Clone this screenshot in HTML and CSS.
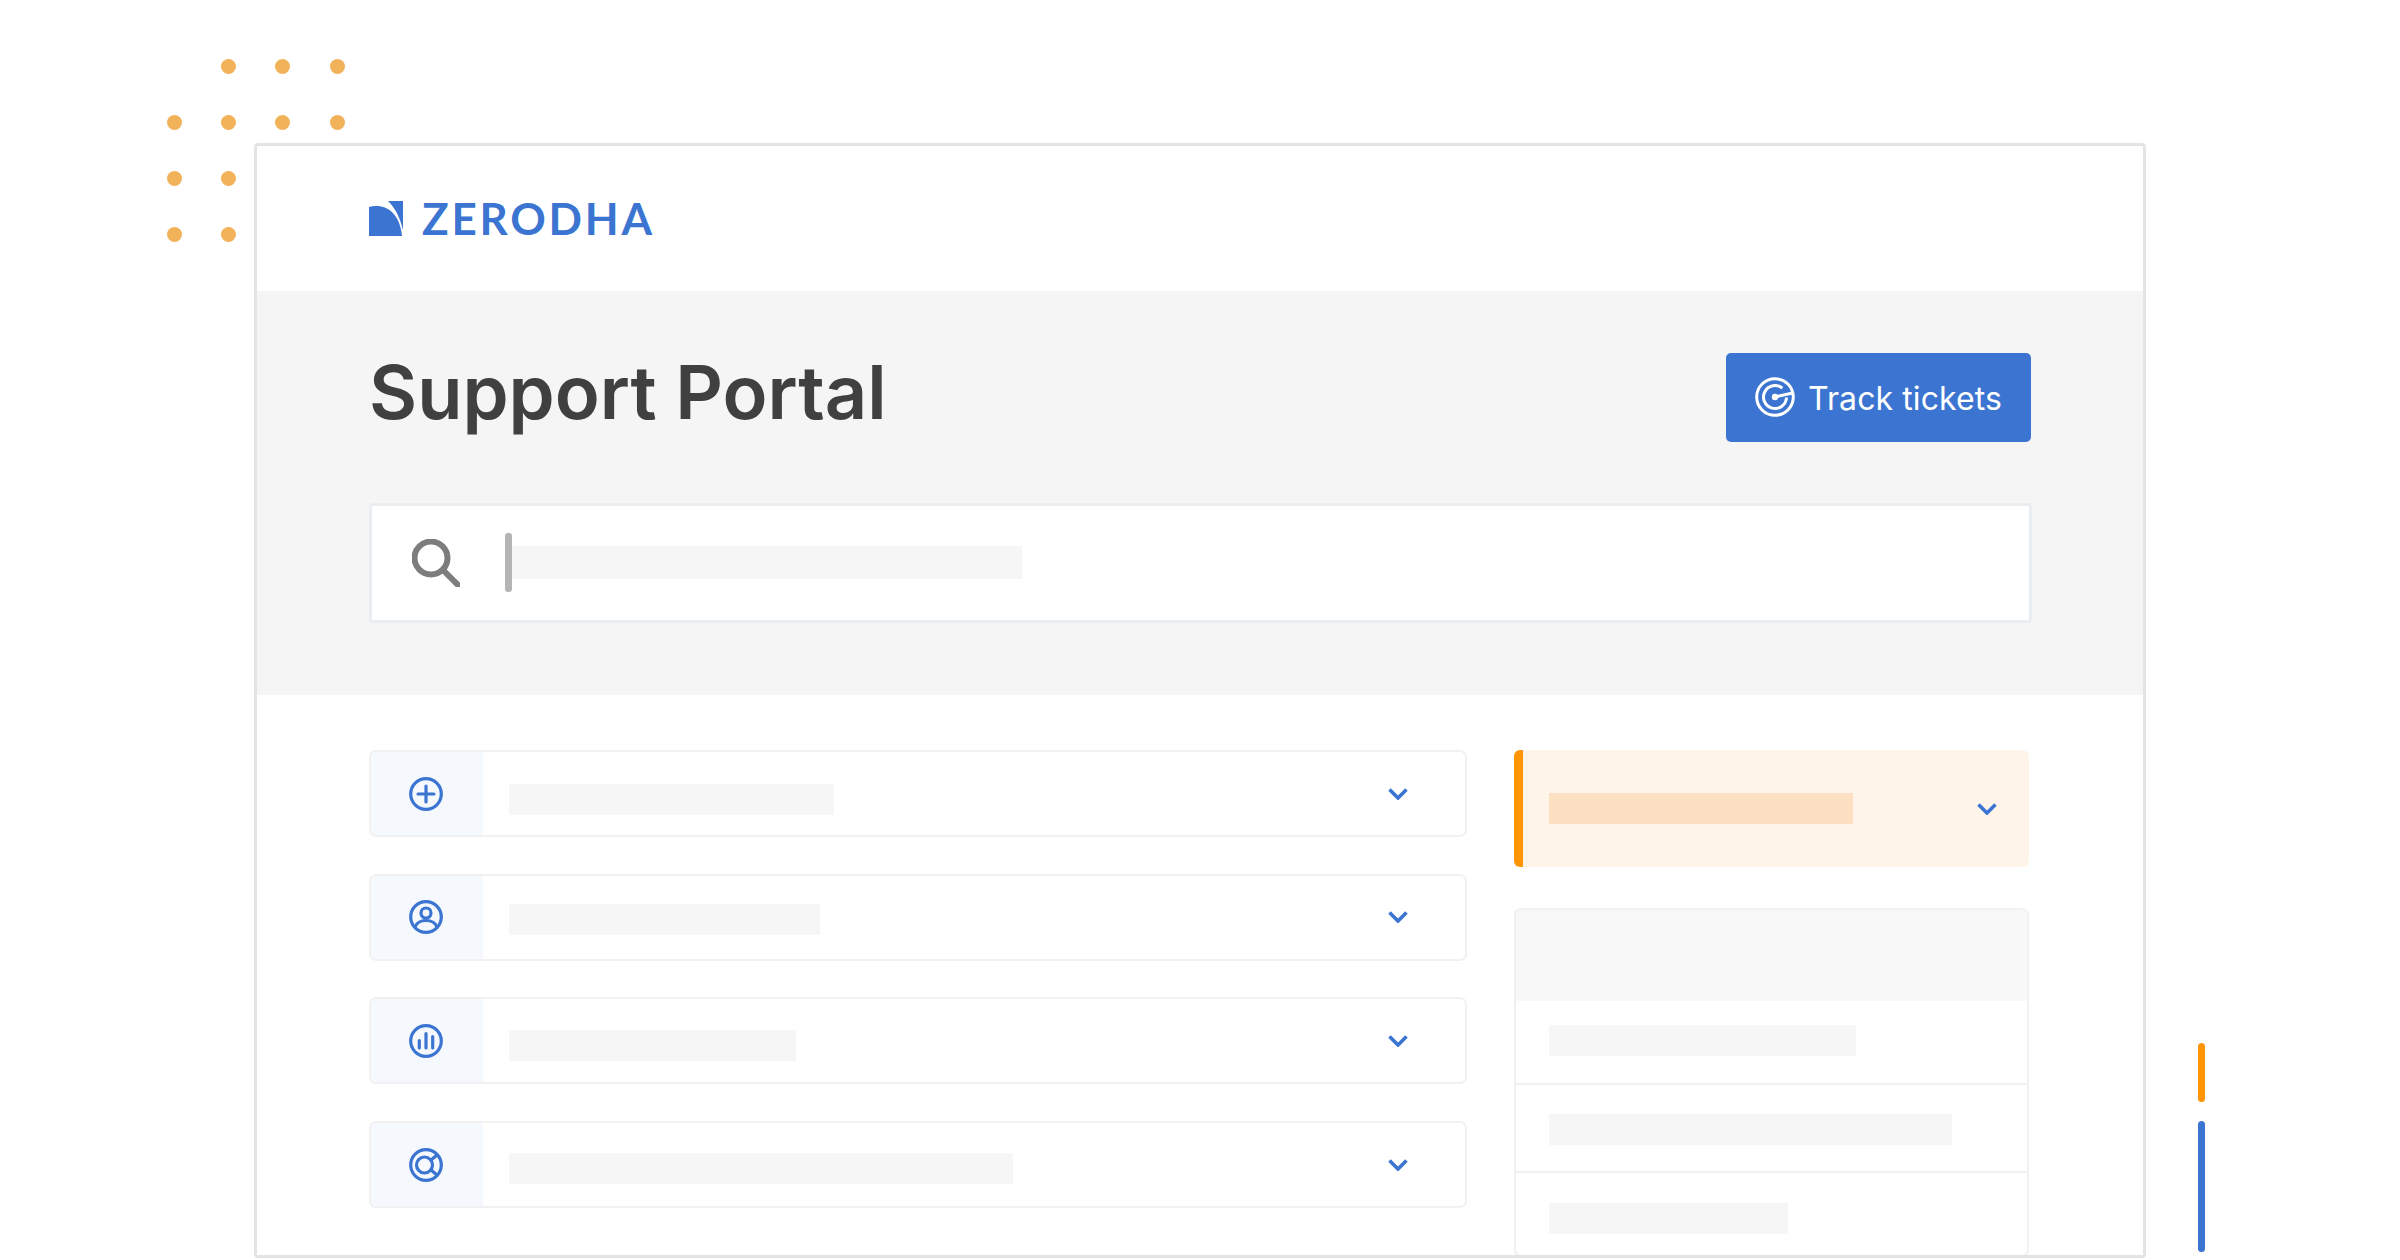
FILE: index.html
```html
<!DOCTYPE html>
<html lang="en">
<head>
  <meta charset="UTF-8">
  <title>Support Portal</title>
  <link rel="stylesheet" href="styles.css">
</head>
<body>

  <!-- decorative dots behind the frame -->
  <div class="dots">
    <i class="empty"></i><i></i><i></i><i></i>
    <i></i><i></i><i></i><i></i>
    <i></i><i></i><i class="empty"></i><i class="empty"></i>
    <i></i><i></i><i class="empty"></i><i class="empty"></i>
  </div>

  <div class="accent accent-orange"></div>
  <div class="accent accent-blue"></div>

  <div class="frame">
    <header class="brand">
      <svg class="logo" viewBox="0 0 34 35" aria-hidden="true">
        <path d="M0 6C11 3 30 6 33 35H0Z"/>
        <path d="M19 0H34V29C31 17 27 8 19 0Z"/>
      </svg>
      <span class="wordmark">ZERODHA</span>
    </header>

    <section class="hero">
      <div class="hero-top">
        <h1>Support Portal</h1>
        <a class="track-btn" href="#">
          <svg class="track-icon" viewBox="0 0 40 40" aria-hidden="true">
            <circle cx="20" cy="20" r="18.300"/>
            <path d="M27.400 11.200A11.500 11.500 0 1 0 31.500 20.500"/>
            <path d="M20 20L37.500 16"/>
            <circle class="solid" cx="20" cy="20" r="3.200"/>
          </svg>
          <span>Track tickets</span>
        </a>
      </div>

      <div class="search">
        <svg class="search-icon" viewBox="0 0 48 48" aria-hidden="true">
          <circle cx="19" cy="19" r="16.500"/>
          <path d="M31 31L46 46"/>
        </svg>
        <span class="caret"></span>
        <span class="bar search-bar"></span>
      </div>
    </section>

    <section class="content">
      <div class="topics">
        <div class="topic">
          <div class="topic-icon">
            <svg viewBox="0 0 34 34" aria-hidden="true">
              <circle cx="17" cy="17" r="15.300"/>
              <path d="M17 9V25M9 17H25"/>
            </svg>
          </div>
          <span class="bar bar-1"></span>
          <svg class="chevron" viewBox="0 0 20 12" aria-hidden="true"><path d="M1.500 1.500L10 10L18.500 1.500"/></svg>
        </div>

        <div class="topic">
          <div class="topic-icon">
            <svg viewBox="0 0 34 34" aria-hidden="true">
              <circle cx="17" cy="17" r="15.300"/>
              <circle cx="17" cy="13" r="5"/>
              <path d="M6 27C8 22 12 20.500 17 20.500S26 22 28 27"/>
            </svg>
          </div>
          <span class="bar bar-2"></span>
          <svg class="chevron" viewBox="0 0 20 12" aria-hidden="true"><path d="M1.500 1.500L10 10L18.500 1.500"/></svg>
        </div>

        <div class="topic">
          <div class="topic-icon">
            <svg viewBox="0 0 34 34" aria-hidden="true">
              <circle cx="17" cy="17" r="15.300"/>
              <path d="M10.300 16.500V24M17 9.500V24M23.700 12.500V24"/>
            </svg>
          </div>
          <span class="bar bar-3"></span>
          <svg class="chevron" viewBox="0 0 20 12" aria-hidden="true"><path d="M1.500 1.500L10 10L18.500 1.500"/></svg>
        </div>

        <div class="topic">
          <div class="topic-icon">
            <svg viewBox="0 0 34 34" aria-hidden="true">
              <circle cx="17" cy="17" r="15.300"/>
              <circle cx="15.500" cy="17" r="8"/>
              <path d="M22 12L28 7M22 22L28 27"/>
            </svg>
          </div>
          <span class="bar bar-4"></span>
          <svg class="chevron" viewBox="0 0 20 12" aria-hidden="true"><path d="M1.500 1.500L10 10L18.500 1.500"/></svg>
        </div>
      </div>

      <aside class="side">
        <div class="notice">
          <span class="bar notice-bar"></span>
          <svg class="chevron" viewBox="0 0 20 12" aria-hidden="true"><path d="M1.500 1.500L10 10L18.500 1.500"/></svg>
        </div>

        <div class="panel">
          <div class="panel-head"></div>
          <div class="panel-row"><span class="bar side-1"></span></div>
          <div class="panel-row"><span class="bar side-2"></span></div>
          <div class="panel-row"><span class="bar side-3"></span></div>
        </div>
      </aside>
    </section>
  </div>

</body>
</html>
```

FILE: styles.css
```css
:root {
  --blue: #3b75d1;
  --orange: #ff9502;
  --line: #f1f1f1;
  --skeleton: #f6f6f6;
  --hero-bg: #f5f5f5;
}

* {
  box-sizing: border-box;
}

body {
  margin: 0;
  padding: 143px 254px 0;
  height: 1260px;
  overflow: hidden;
  background: #fff;
  font-family: "Inter", "Liberation Sans", sans-serif;
  position: relative;
}

/* decoration */

.dots {
  position: absolute;
  left: 167px;
  top: 59px;
  display: grid;
  grid-template-columns: repeat(4, 15px);
  grid-auto-rows: 15px;
  column-gap: 39.200px;
  row-gap: 41px;
}

.dots i {
  background: #f2b259;
  border-radius: 50%;
}

.dots .empty {
  background: none;
}

.accent {
  position: absolute;
  left: 2198px;
  width: 7px;
  border-radius: 4px;
}

.accent-orange {
  top: 1043px;
  height: 59px;
  background: var(--orange);
}

.accent-blue {
  top: 1121px;
  height: 131px;
  background: var(--blue);
}

/* frame */

.frame {
  width: 1892px;
  height: 1115px;
  border: 3px solid #e4e4e4;
  border-radius: 4px;
  background: #fff;
  overflow: hidden;
  position: relative;
}

.brand {
  height: 145px;
  padding-left: 112px;
  display: flex;
  align-items: center;
}

.logo {
  width: 34px;
  height: 35px;
  fill: var(--blue);
  margin-right: 19px;
}

.wordmark {
  font-family: "Lato", sans-serif;
  font-size: 44px;
  font-weight: 700;
  color: var(--blue);
  letter-spacing: 2.800px;
  line-height: 1;
  margin-top: -1px;
}

.hero {
  height: 404px;
  padding: 62px 112px 0;
  background: var(--hero-bg);
}

.hero-top {
  display: flex;
  justify-content: space-between;
  align-items: center;
  height: 89px;
}

h1 {
  margin: 0 0 12px;
  font-size: 74px;
  font-weight: 600;
  color: #404040;
  line-height: 1;
}

.track-btn {
  width: 305px;
  height: 89px;
  padding-left: 29px;
  display: flex;
  align-items: center;
  gap: 13px;
  background: var(--blue);
  border-radius: 5px;
  color: #fff;
  font-size: 32px;
  letter-spacing: 0.100px;
  text-decoration: none;
}

.track-btn span {
  margin-top: 2px;
}

.track-icon {
  width: 40px;
  height: 40px;
  margin-top: -2px;
  fill: none;
  stroke: #fff;
  stroke-width: 3;
}

.track-icon .solid {
  fill: #fff;
  stroke: none;
}

.search {
  margin: 61px -1px 0 0;
  height: 120px;
  padding-left: 40px;
  display: flex;
  align-items: center;
  background: #fff;
  border: 3px solid #ebeef1;
  border-radius: 3px;
}

.search-icon {
  width: 48px;
  height: 48px;
  margin-right: 45px;
  fill: none;
  stroke: #7d7d7d;
  stroke-width: 6;
  stroke-linecap: round;
}

.caret {
  width: 7px;
  height: 59px;
  margin-top: -1px;
  background: #b4b4b4;
  border-radius: 3px;
}

.bar {
  display: block;
  height: 31px;
  background: var(--skeleton);
}

.search-bar {
  width: 510px;
  height: 33px;
  margin-top: -2px;
}

/* main content */

.content {
  padding: 55px 0 0 112px;
  display: grid;
  grid-template-columns: 1098px 515px;
  column-gap: 47px;
  align-items: start;
}

.topics {
  display: flex;
  flex-direction: column;
  gap: 36.700px;
}

.topic {
  height: 87px;
  display: flex;
  align-items: center;
  border: 2px solid var(--line);
  border-radius: 7px;
  padding-right: 57px;
}

.topic-icon {
  width: 112px;
  height: 100%;
  padding-right: 3px;
  display: flex;
  align-items: center;
  justify-content: center;
  background: #f5f9fe;
  border-radius: 5px 0 0 5px;
  margin-right: 26px;
}

.topic-icon svg {
  width: 34px;
  height: 34px;
  fill: none;
  stroke: var(--blue);
  stroke-width: 3.200;
  stroke-linecap: round;
}

.chevron {
  width: 20px;
  height: 12px;
  margin-left: auto;
  fill: none;
  stroke: var(--blue);
  stroke-width: 3.600;
}

.bar-1 { width: 325px; margin-top: 11px; }
.bar-2 { width: 311px; margin-top: 5px; }
.bar-3 { width: 287px; margin-top: 9px; }
.bar-4 { width: 504px; margin-top: 7px; }

/* side column */

.notice {
  height: 117px;
  display: flex;
  align-items: center;
  padding: 0 32px 0 26px;
  background: #fef4ea;
  border-left: 9px solid var(--orange);
  border-radius: 6px;
}

.notice-bar {
  width: 304px;
  background: #fddfc2;
}

.panel {
  margin-top: 41px;
  height: 349px;
  border: 2px solid var(--line);
  border-radius: 7px;
  overflow: hidden;
}

.panel-head {
  height: 91px;
  background: #f8f8f8;
}

.panel-row {
  height: 84px;
  padding: 24px 0 0 33px;
  border-bottom: 2px solid var(--line);
}

.panel-row:nth-child(3) {
  height: 88px;
  padding-top: 29px;
}

.panel-row:last-child {
  height: 84px;
  padding-top: 30px;
  border-bottom: 0;
}

.side-1 { width: 307px; }
.side-2 { width: 403px; }
.side-3 { width: 239px; }
```
